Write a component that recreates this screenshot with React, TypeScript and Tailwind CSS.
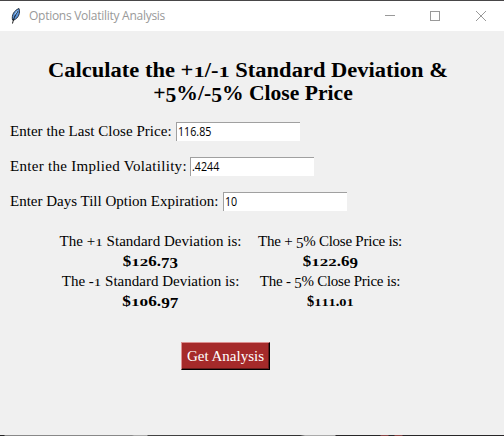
import { Fragment } from "react";

const serif = "font-['Georgia','Liberation_Serif',serif]";

/** Renders text with old-style figures: 0-2 at x-height, 3-5/7/9 descending, 6/8 ascending. */
function OldStyle({ text }: { text: string }) {
  return (
    <>
      {text.split("").map((c, i) => {
        if ("012".includes(c)) return <span key={i} className="inline-block scale-y-[.74] leading-none [transform-origin:50%_76%]">{c}</span>;
        if ("34579".includes(c)) return <span key={i} className="relative top-[2px]">{c}</span>;
        return <Fragment key={i}>{c}</Fragment>;
      })}
    </>
  );
}

function Field({ label, value, track }: { label: string; value: string; track: string }) {
  return (
    <div className="flex h-[35px] items-start">
      <span className={`mr-[4px] leading-[18px] whitespace-nowrap ${track}`}>{label}</span>
      <span className="h-[19px] w-[124px] border-t border-l border-[#a0a0a0] bg-white pl-px font-['Open_Sans',sans-serif] text-[12px] leading-[18px]">
        <span className="inline-block origin-left scale-x-[.89]">{value}</span>
      </span>
    </div>
  );
}

function Result({ label, value, track, stretch }: { label: string; value: string; track: string; stretch: string }) {
  return (
    <div className="flex h-[40px] flex-col items-center leading-[20px] whitespace-nowrap">
      <span className={`h-[20px] ${track}`}><OldStyle text={label} /></span>
      <span className={`h-[20px] font-bold ${stretch}`}><OldStyle text={value} /></span>
    </div>
  );
}

export default function App() {
  return (
    <div className={`flex h-[436px] w-[504px] flex-col overflow-hidden bg-[#f0f0f0] text-[15px] text-black ${serif}`}>
      <div className="h-px shrink-0 bg-[#484648]" />
      <header className="flex h-[30px] shrink-0 items-center bg-white pl-[10px]">
        <svg width="12" height="18" viewBox="0 0 12 18" className="mr-[7px]">
          <path d="M2.500 13C1.500 8 4 3.500 9 1.500C10.500 6 8.500 11 4 13Z" fill="#5b95dc" stroke="#17202c" strokeWidth="0.9" />
          <path d="M8 4C6 7 4 10 2.500 16.500" fill="none" stroke="#111" strokeWidth="1" />
          <path d="M5 7.500L7.500 3.500" stroke="#a8d0f5" strokeWidth="1" />
        </svg>
        <span className="font-['Open_Sans',sans-serif] text-[12px] tracking-[-0.27px] text-[#999]">Options Volatility Analysis</span>
        <svg width="102" height="12" viewBox="0 0 102 12" className="mr-[17px] ml-auto" fill="none" stroke="#999">
          <path d="M0 5.500H10M45.500 1.500H54.500V10.500H45.500Z" shapeRendering="crispEdges" />
          <path d="M91 1L101 11M101 1L91 11" />
        </svg>
      </header>
      <main className="flex grow flex-col">
        <h1 className="mt-[28px] text-center text-[20px] leading-[23px] font-bold whitespace-nowrap">
          <span className="block h-[23px] origin-center -translate-x-[4px] scale-x-[1.125]"><OldStyle text="Calculate the +1/-1 Standard Deviation &" /></span>
          <span className="block h-[23px] origin-center translate-x-px scale-x-[1.08]"><OldStyle text="+5%/-5% Close Price" /></span>
        </h1>
        <div className="mt-[17px] flex flex-col pl-[10px]">
          <Field label="Enter the Last Close Price:" value="116.85" track="w-[162px] tracking-[0.03px]" />
          <Field label="Enter the Implied Volatility:" value=".4244" track="w-[176px] tracking-[0.3px]" />
          <Field label="Enter Days Till Option Expiration:" value="10" track="w-[209px] tracking-[0px]" />
        </div>
        <div className="mt-[4px] ml-[59px] flex gap-[16px]">
          <div className="w-[183px]">
            <Result label="The +1 Standard Deviation is:" value="$126.73" track="tracking-[0.03px]" stretch="scale-x-[1.13]" />
            <Result label="The -1 Standard Deviation is:" value="$106.97" track="tracking-[0px]" stretch="scale-x-[1.15]" />
          </div>
          <div className="w-[144px]">
            <Result label="The + 5% Close Price is:" value="$122.69" track="tracking-[-0.25px]" stretch="scale-x-[1.13]" />
            <Result label="The - 5% Close Price is:" value="$111.01" track="tracking-[-0.25px]" stretch="scale-x-[.96]" />
          </div>
        </div>
        <button className="mt-[31px] ml-[181px] h-[28px] w-[89px] border border-t-[#dc9090] border-r-black border-b-black border-l-[#dc9090] bg-[#a52a2a] leading-[24px] whitespace-nowrap text-white shadow-[inset_-1px_-1px_#651a1a]">Get Analysis</button>
      </main>
      <div className="h-px shrink-0 bg-[linear-gradient(90deg,#222_0,#222_4px,#888_5px,#888_132px,#aaa_134px,#aaa_147px,#444_148px,#333_300px,#aaa_305px,#aaa_335px,#282628_336px,#282628_380px,#844_381px,#844_388px,#282628_389px,#282628_394px,#844_395px,#844_402px,#282628_403px)]" />
    </div>
  );
}
